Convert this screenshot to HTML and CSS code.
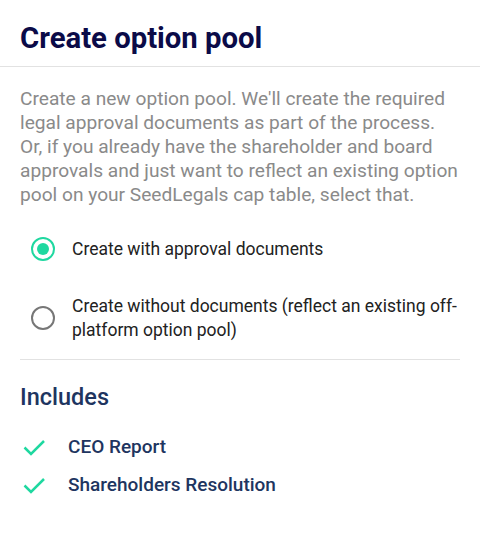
FILE: index.html
```html
<!doctype html>
<html>
	<head>
		<link rel="stylesheet" href="styles.css">
	</head>
	<body>

		<div class="header">
			<h1 class="title">Create option pool</h1>
		</div>

		<div class="content">
			<p class="intro">Create a new option pool. We'll create the required legal approval documents as part of the process.<br>Or, if you already have the shareholder and board approvals and just want to reflect an existing option pool on your SeedLegals cap table, select that.</p>

			<div class="options">
				<label class="option">
					<span class="radio checked"></span>
					<span class="option-label">Create with approval documents</span>
				</label>
				<label class="option">
					<span class="radio"></span>
					<span class="option-label">Create without documents (reflect an existing off-platform option pool)</span>
				</label>
			</div>

			<div class="includes">
				<h2 class="includes-title">Includes</h2>
				<ul class="includes-list">
					<li>
						<svg class="check" viewBox="0 0 24 24" width="24" height="24"><path d="M2.5 12.5l6.5 6.5L22 6" fill="none" stroke="#1fd8a0" stroke-width="2.5"/></svg>
						CEO Report
					</li>
					<li>
						<svg class="check" viewBox="0 0 24 24" width="24" height="24"><path d="M2.5 12.5l6.5 6.5L22 6" fill="none" stroke="#1fd8a0" stroke-width="2.5"/></svg>
						Shareholders Resolution
					</li>
				</ul>
			</div>
		</div>

	</body>
</html>
```

FILE: styles.css
```css
body {
	margin: 0;
	font-family: Roboto, "Liberation Sans", sans-serif;
	background: #fff;
}

.header {
	padding: 20px 20px 10px;
	border-bottom: 1px solid #e2e2e2;
}

.title {
	margin: 0;
	font-size: 29.3px;
	line-height: 36px;
	font-weight: 700;
	color: #0b0b48;
}

.content {
	padding: 0 20px;
}

.intro {
	margin: 20px -6px 0 0;
	font-size: 19.15px;
	line-height: 24px;
	color: #8a8a8a;
}

.options {
	display: flex;
	flex-direction: column;
	gap: 33px;
	padding: 30px 0 17px;
	border-bottom: 1px solid #e2e2e2;
}

.option {
	display: flex;
	align-items: center;
	gap: 17px;
	padding-left: 11px;
}

.radio {
	flex: none;
	width: 20px;
	height: 20px;
	border: 2px solid #777;
	border-radius: 50%;
	display: flex;
	align-items: center;
	justify-content: center;
}
	.radio.checked {
		border-color: #1fd8a0;
	}
	.radio.checked::after {
		content: "";
		width: 12px;
		height: 12px;
		border-radius: 50%;
		background: #1fd8a0;
	}

.option-label {
	font-size: 17.5px;
	line-height: 24px;
	color: #222;
}

.includes {
	padding-top: 21px;
}

.includes-title {
	margin: 0 0 22px;
	font-size: 23.5px;
	line-height: 32px;
	font-weight: 500;
	color: #1e3560;
}

.includes-list {
	list-style: none;
	margin: 0;
	padding: 0;
	display: flex;
	flex-direction: column;
	gap: 14px;
}
	.includes-list li {
		display: flex;
		align-items: center;
		gap: 22px;
		padding-left: 2px;
		font-size: 19px;
		line-height: 24px;
		font-weight: 500;
		color: #1e3560;
	}
```
